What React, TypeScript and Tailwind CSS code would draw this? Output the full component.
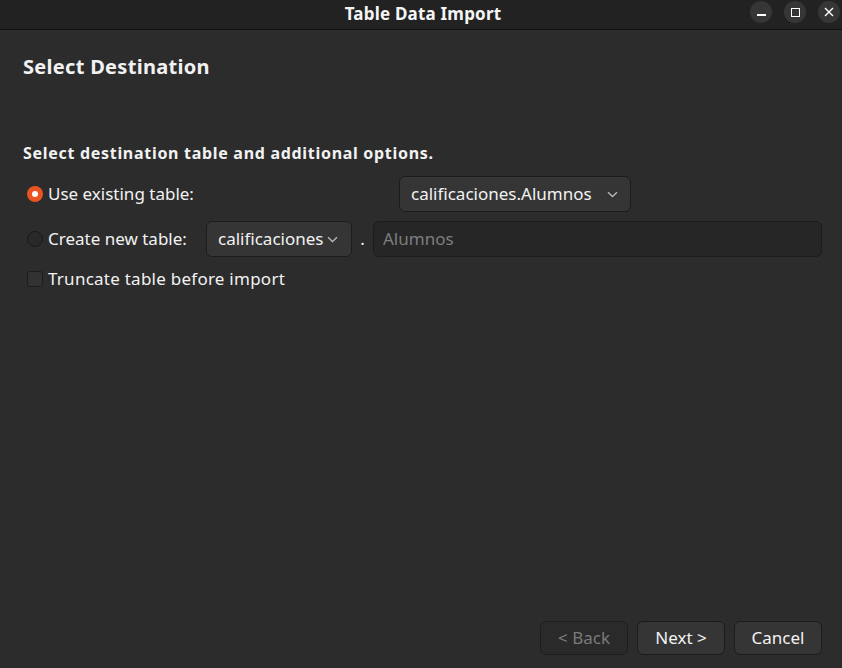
import React from 'react'

function Chevron() {
  return (
    <svg width="11" height="7" viewBox="0 0 11 7" className="shrink-0">
      <path d="M1 1.2 L5.5 5.5 L10 1.2" fill="none" stroke="#b8b8b8" strokeWidth="1.3" />
    </svg>
  )
}

function WinButton({ children }: { children: React.ReactNode }) {
  return (
    <div className="w-[22px] h-[22px] rounded-full bg-[#363636] flex items-center justify-center">
      {children}
    </div>
  )
}

export default function App() {
  return (
    <div
      className="w-[842px] h-[668px] flex flex-col bg-[#2c2c2c] text-[#f2f2f2] overflow-hidden"
      style={{ fontFamily: '"Noto Sans", "Open Sans", sans-serif' }}
    >
      {/* title bar */}
      <div className="h-[30px] shrink-0 bg-[#222222] border-b border-[#0f0f0f] flex items-center relative">
        <div className="flex-1 text-center text-[17px] font-bold text-[#f5f5f5] leading-none pl-[4px] pb-[2px] tracking-[0.2px]">
          Table Data Import
        </div>
        <div className="absolute right-[2px] top-[1px] flex gap-[12px]">
          <WinButton>
            <div className="w-[9px] h-[1.5px] bg-white mt-[6px]" />
          </WinButton>
          <WinButton>
            <div className="w-[9px] h-[9px] border-[1.5px] border-white" />
          </WinButton>
          <WinButton>
            <svg width="10" height="10" viewBox="0 0 10 10">
              <path d="M1 1 L9 9 M9 1 L1 9" stroke="white" strokeWidth="1.4" />
            </svg>
          </WinButton>
        </div>
      </div>

      {/* content */}
      <div className="flex-1 flex flex-col pl-[23px] pr-[20px]">
        <h1 className="mt-[23px] text-[20px] font-bold leading-[28px] tracking-[0.3px]">Select Destination</h1>

        <p className="mt-[61px] text-[16px] font-bold leading-[22px] tracking-[0.7px]">
          Select destination table and additional options.
        </p>

        {/* row 1 */}
        <div className="mt-[12px] h-[36px] flex items-center">
          <div className="w-[376px] flex items-center pl-[4px]">
            <div className="w-[16px] h-[16px] rounded-full bg-[#e95420] flex items-center justify-center">
              <div className="w-[6px] h-[6px] rounded-full bg-white" />
            </div>
            <span className="ml-[5px] text-[17px]">Use existing table:</span>
          </div>
          <div className="w-[232px] h-[36px] rounded-[6px] bg-[#353535] border border-[#1c1c1c] flex items-center justify-between pl-[11px] pr-[12px]">
            <span className="text-[17px]">calificaciones.Alumnos</span>
            <Chevron />
          </div>
        </div>

        {/* row 2 */}
        <div className="mt-[9px] h-[36px] flex items-center">
          <div className="w-[183px] flex items-center pl-[4px]">
            <div className="w-[16px] h-[16px] rounded-full bg-[#292929] border border-[#1a1a1a]" />
            <span className="ml-[5px] text-[17px]">Create new table:</span>
          </div>
          <div className="w-[146px] h-[36px] rounded-[6px] bg-[#353535] border border-[#1c1c1c] flex items-center pl-[11px] pr-[8px]">
            <span className="text-[17px]">calificaciones</span>
            <span className="ml-[4px]"><Chevron /></span>
          </div>
          <div className="w-[21px] text-center text-[17px]">.</div>
          <div className="flex-1 h-[36px] rounded-[6px] bg-[#262626] border border-[#1c1c1c] flex items-center pl-[9px]">
            <span className="text-[17px] text-[#7d7d7d]">Alumnos</span>
          </div>
        </div>

        {/* row 3 */}
        <div className="mt-[6px] h-[32px] flex items-center pl-[4px]">
          <div className="w-[16px] h-[16px] rounded-[3px] bg-[#323232] border border-[#1c1c1c]" />
          <span className="ml-[5px] text-[17px] tracking-[0.25px]">Truncate table before import</span>
        </div>

        {/* footer */}
        <div className="mt-auto mb-[13px] flex justify-end gap-[9px]">
          <div className="w-[88px] h-[34px] rounded-[6px] bg-[#2a2a2a] border border-[#1e1e1e] flex items-center justify-center text-[17px] text-[#7a7a7a]">
            &lt; Back
          </div>
          <div className="w-[88px] h-[34px] rounded-[6px] bg-[#353535] border border-[#1c1c1c] flex items-center justify-center text-[17px]">
            Next &gt;
          </div>
          <div className="w-[88px] h-[34px] rounded-[6px] bg-[#353535] border border-[#1c1c1c] flex items-center justify-center text-[17px]">
            Cancel
          </div>
        </div>
      </div>
    </div>
  )
}
